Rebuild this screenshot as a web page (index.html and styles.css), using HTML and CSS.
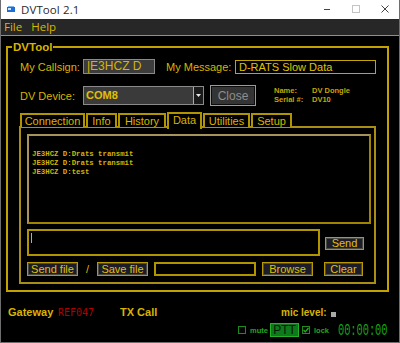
FILE: index.html
```html
<!DOCTYPE html>
<html>
<head>
<meta charset="utf-8">
<title>DVTool 2.1</title>
<link rel="stylesheet" href="styles.css">
</head>
<body>
<div class="window">
  <div class="titlebar">
    <svg class="appicon" width="8" height="6" viewBox="0 0 8 6"><rect x="0" y="1" width="8" height="5" fill="#1d6fd6"/><rect x="1" y="0" width="6" height="1" fill="#7ab4f0"/><rect x="1" y="2" width="3" height="2" fill="#cfe4fb"/></svg>
    <span class="title">DVTool 2.1</span>
    <div class="winctrls">
      <svg width="10" height="10" viewBox="0 0 10 10"><line x1="2" y1="5.5" x2="8" y2="5.5" stroke="#444" stroke-width="1"/></svg>
      <svg width="10" height="10" viewBox="0 0 10 10"><rect x="1.5" y="1.5" width="7" height="7" fill="none" stroke="#c4c4c4" stroke-width="1"/></svg>
      <svg width="10" height="10" viewBox="0 0 10 10"><path d="M1.5 1.5 L8.5 8.5 M8.5 1.5 L1.5 8.5" stroke="#444" stroke-width="1"/></svg>
    </div>
  </div>
  <div class="menubar"><span class="menu">File</span><span class="menu">Help</span></div>
  <div class="client">
    <div class="group">
      <span class="legend">DVTool</span>
      <div class="row r1">
        <span class="lbl lblcol">My Callsign:</span>
        <div class="callsign">|E3HCZ D</div>
        <span class="lbl msglbl">My Message:</span>
        <div class="message">D-RATS Slow Data</div>
      </div>
      <div class="row r2">
        <span class="lbl lblcol">DV Device:</span>
        <div class="combo">
          <span class="combo-text">COM8</span>
          <span class="combo-btn"><svg width="5" height="5" viewBox="0 0 5 5"><path d="M0 1 H5 L2.5 4 Z" fill="#e8e8e8"/></svg></span>
        </div>
        <button class="closebtn">Close</button>
        <div class="devinfo">
          <div class="inforow"><span class="k">Name:</span><span>DV Dongle</span></div>
          <div class="inforow"><span class="k">Serial #:</span><span>DV10</span></div>
        </div>
      </div>
      <div class="tabs">
        <span class="tab t-conn">Connection</span>
        <span class="tab t-info">Info</span>
        <span class="tab t-hist">History</span>
        <span class="tab t-data active">Data</span>
        <span class="tab t-util">Utilities</span>
        <span class="tab t-setup">Setup</span>
      </div>
      <div class="panel">
        <div class="log">
          <div>JE3HCZ D:Drats transmit</div>
          <div>JE3HCZ D:Drats transmit</div>
          <div>JE3HCZ D:test</div>
        </div>
        <div class="sendrow">
          <div class="input"><span class="caret"></span></div>
          <button class="btn sendbtn">Send</button>
        </div>
        <div class="filerow">
          <button class="btn filebtn">Send file</button>
          <span class="slash">/</span>
          <button class="btn filebtn">Save file</button>
          <div class="pathfield"></div>
          <button class="btn browsebtn">Browse</button>
          <button class="btn clearbtn">Clear</button>
        </div>
      </div>
    </div>
    <div class="status">
      <div class="statline">
        <span class="bold gw">Gateway</span>
        <span class="ref">REF047</span>
        <span class="bold txcall">TX Call</span>
        <span class="bold mic">mic level:</span>
        <span class="micbox"></span>
      </div>
      <div class="ctrlline">
        <span class="chk"></span>
        <span class="glbl">mute</span>
        <span class="ptt">PTT</span>
        <span class="chk checked"><svg width="6" height="6" viewBox="0 0 6 6"><path d="M0.5 3 L2.3 4.8 L5.5 1" fill="none" stroke="#22b422" stroke-width="1.3"/></svg></span>
        <span class="glbl">lock</span>
        <span class="timer">00:00:00</span>
      </div>
    </div>
  </div>
</div>
</body>
</html>
```

FILE: styles.css
```css
* { box-sizing: border-box; }
html, body { margin: 0; padding: 0; }
body { width: 400px; height: 343px; overflow: hidden; background: #000; font-family: "Liberation Sans", Arial, sans-serif; }

.window {
  width: 400px; height: 343px;
  background: #000;
  border-left: 1px solid #6e6e6e;
  border-right: 1px solid #6e6e6e;
  border-bottom: 1px solid #6e6e6e;
  display: flex; flex-direction: column;
}

.titlebar {
  height: 19px; background: #fff;
  display: flex; align-items: center;
  padding-left: 6px;
}
.appicon { display: block; margin-top: -1px; }
.title { margin-left: 6px; font-family: "Open Sans", "Noto Sans", sans-serif; font-size: 11.5px; color: #2a2a2a; letter-spacing: 0.1px; }
.winctrls { margin-left: auto; display: flex; gap: 19px; margin-right: 9px; margin-top: -1px; }
.winctrls svg { display: block; }

.menubar {
  height: 17px; background: #272727;
  border-bottom: 1px solid #b39800;
  display: flex; align-items: center; gap: 9px;
  padding-left: 3px;
}
.menu { font-family: "Open Sans", "Noto Sans", sans-serif; font-size: 11.5px; color: #d8b800; line-height: 14px; }

.client { flex: 1; position: relative; }

.group {
  position: relative;
  margin: 10px 0 0 5px;
  width: 383px; height: 246px;
  border: 2px solid #c2a200;
  padding: 11px 0 0 11px;
}
.legend {
  position: absolute; left: 4px; top: -8px;
  background: #000; padding: 0 1px;
  font-weight: bold; font-size: 11.5px; line-height: 14px; color: #d8b400;
}

.lbl { font-size: 11px; color: #d8b400; white-space: nowrap; }
.lblcol { width: 63px; }

.row { display: flex; align-items: center; padding-left: 1px; }
.r1 { height: 15px; }
.callsign {
  width: 72px; height: 15px;
  background: #3c3c3c; border: 1px solid #8a8a8a;
  color: #d8b400; font-size: 12px; line-height: 13px; padding-left: 3px;
}
.msglbl { margin-left: 11px; width: 69px; }
.message {
  width: 141px; height: 14px;
  border: 1px solid #c4a400;
  color: #e0c000; font-size: 11px; line-height: 12px; padding-left: 3px;
}

.r2 { height: 21px; margin-top: 11px; }
.combo {
  width: 121px; height: 19px;
  display: flex; background: #3a3a3a; border: 1px solid #8a8a8a;
}
.combo-text { flex: 1; color: #e0c000; font-weight: bold; font-size: 11px; line-height: 17px; padding-left: 2px; }
.combo-btn {
  width: 10px; height: 17px; background: #1a1a1a;
  border-left: 1px solid #aaa;
  display: flex; align-items: center; justify-content: center;
}
.combo-btn svg { display: block; }
.closebtn {
  margin-left: 6px; width: 46px; height: 21px;
  background: #343434; border: 1px solid #9a9a9a;
  box-shadow: inset 0 0 0 1px #0c0c0c;
  color: #8e8e8e; font-family: "Liberation Sans", Arial, sans-serif; font-size: 12px; padding: 0;
}
.devinfo { margin-left: 18px; font-size: 7.5px; font-weight: bold; color: #c8a400; line-height: 9px; margin-top: -2px; }
.inforow { display: flex; }
.k { width: 38px; }

.tabs { display: flex; align-items: flex-end; gap: 1px; margin-top: 6px; padding-left: 1px; height: 15px; position: relative; z-index: 2; }
.tab {
  height: 14px;
  border: 2px solid #b09400; border-bottom: none;
  color: #d8b400; font-size: 11px; line-height: 12px; text-align: center;
  background: #000;
}
.tab.active { height: 17px; margin-bottom: -2px; line-height: 13px; padding-bottom: 2px; }
.t-conn { width: 65px; }
.t-info { width: 31px; }
.t-hist { width: 48px; }
.t-data { width: 35px; }
.t-util { width: 47px; }
.t-setup { width: 41px; }

.panel {
  width: 357px; height: 158px;
  margin-top: -1px;
  border: 2px solid #a88e14;
  padding: 6px 0 0 6px;
}
.log {
  width: 344px; height: 90px;
  border-top: 2px solid #a8945a; border-left: 2px solid #a8945a;
  border-bottom: 2px solid #a08400; border-right: 2px solid #a08400;
  padding: 14px 0 0 3px;
  font-family: "Liberation Mono", monospace; font-size: 7.35px; line-height: 9px; font-weight: bold;
  color: #d6b400;
}
.sendrow { display: flex; align-items: center; margin-top: 5px; }
.input {
  width: 293px; height: 27px;
  border: 2px solid #b09400;
  padding: 2px 0 0 2px;
}
.caret { display: block; width: 1px; height: 10px; background: #d8b400; }
.btn {
  padding: 0; height: 13px;
  background: #1c1c2a; border: 1px solid #b89a00;
  box-shadow: inset 0 0 0 1px #4a4a40;
  color: #e0c000; font-family: "Liberation Sans", Arial, sans-serif; font-size: 11px; line-height: 11px;
}
.sendbtn { margin-left: 5px; width: 39px; margin-top: 1px; }
.filerow { display: flex; align-items: center; margin-top: 6px; height: 14px; }
.filebtn { width: 51px; height: 14px; }
.slash { width: 19px; text-align: center; color: #d8b400; font-size: 11px; }
.pathfield { margin-left: 6px; width: 102px; height: 14px; border: 2px solid #b09400; }
.browsebtn { margin-left: 6px; width: 51px; height: 14px; }
.clearbtn { margin-left: 11px; width: 39px; height: 14px; }

.status { padding-left: 7px; margin-top: 14px; }
.statline { display: flex; align-items: center; height: 12px; font-size: 11px; white-space: nowrap; }
.statline > span { flex-shrink: 0; }
.bold { font-weight: bold; color: #d8b400; }
.gw { width: 50px; }
.ref { color: #b00000; font-family: "DejaVu Sans Mono", monospace; font-size: 10px; width: 62px; }
.txcall { width: 161px; }
.mic { width: 50px; font-size: 10px; }
.micbox { width: 5px; height: 5px; background: #a8a8a8; margin-top: 4px; }

.ctrlline { display: flex; align-items: center; height: 14px; margin-top: 5px; margin-left: 230px; white-space: nowrap; }
.ctrlline > span { flex-shrink: 0; }
.chk { width: 8px; height: 8px; border: 1px solid #1d8c1d; background: #050505; display: flex; align-items: center; justify-content: center; }
.chk svg { display: block; }
.glbl { color: #22a822; font-size: 7.5px; font-weight: bold; margin-left: 4px; width: 16px; }
.ptt {
  margin-left: 4px; margin-right: 3px;
  width: 29px; height: 14px;
  background: #0f7a1c; border: 1px solid #26b026;
  color: #041a04; font-size: 12px; line-height: 12px; text-align: center;
}
.timer {
  margin-left: 8px;
  font-family: "Liberation Mono", monospace; font-size: 10.4px; color: #17a317;
  display: inline-block; transform: scaleY(1.65); letter-spacing: -0.05px;
}
```
